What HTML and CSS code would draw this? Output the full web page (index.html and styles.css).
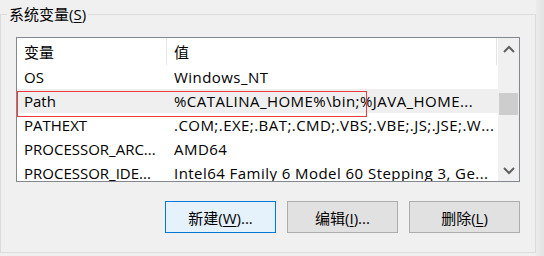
FILE: index.html
```html
<!DOCTYPE html>
<html lang="zh-CN">
<head>
<meta charset="utf-8">
<link rel="stylesheet" href="styles.css">
</head>
<body>
<div class="window">
  <fieldset class="group">
    <legend class="group-title">系统变量(<u>S</u>)</legend>
    <div class="listbox">
      <div class="list">
        <div class="header">
          <div class="col1 hcell">变量</div>
          <div class="col2 hcell">值</div>
        </div>
        <div class="row"><div class="col1">OS</div><div class="col2">Windows_NT</div></div>
        <div class="row selected"><div class="col1">Path</div><div class="col2">%CATALINA_HOME%\bin;%JAVA_HOME...</div></div>
        <div class="row"><div class="col1">PATHEXT</div><div class="col2">.COM;.EXE;.BAT;.CMD;.VBS;.VBE;.JS;.JSE;.W...</div></div>
        <div class="row"><div class="col1">PROCESSOR_ARC...</div><div class="col2">AMD64</div></div>
        <div class="row"><div class="col1">PROCESSOR_IDE...</div><div class="col2">Intel64 Family 6 Model 60 Stepping 3, Ge...</div></div>
        <div class="mark"></div>
      </div>
      <div class="scrollbar">
        <div class="sb-btn">
          <svg width="12" height="8" viewBox="0 0 12 8"><path d="M1 7 L6 2 L11 7" fill="none" stroke="#606060" stroke-width="2"/></svg>
        </div>
        <div class="sb-track"><div class="sb-thumb"></div></div>
        <div class="sb-btn">
          <svg width="12" height="8" viewBox="0 0 12 8"><path d="M1 1 L6 6 L11 1" fill="none" stroke="#606060" stroke-width="2"/></svg>
        </div>
      </div>
    </div>
    <div class="buttons">
      <button class="btn default">新建(<u>W</u>)...</button>
      <button class="btn">编辑(<u>I</u>)...</button>
      <button class="btn">删除(<u>L</u>)</button>
    </div>
  </fieldset>
  <div class="edge"></div>
</div>
</body>
</html>
```
FILE: styles.css
```css
html, body {
  margin: 0;
  padding: 0;
  background: #f0f0f0;
}
body {
  font-family: "Open Sans", "Noto Sans CJK SC", sans-serif;
  font-size: 15px;
  color: #000;
}
.window {
  width: 544px;
  height: 256px;
  display: flex;
  box-sizing: border-box;
  padding-top: 4px;
  overflow: hidden;
}
.group {
  margin: 0;
  width: 536px;
  height: 249px;
  box-sizing: border-box;
  border: 1px solid #dcdcdc;
  padding: 0 15px 0 15px;
  min-width: 0;
}
.group-title {
  margin-left: -9px;
  padding: 0 2px;
  line-height: 20px;
  height: 20px;
}
.group-title u, .btn u {
  text-decoration-thickness: 1px;
  text-underline-offset: 2px;
}
.listbox {
  margin-top: 13px;
  width: 504px;
  height: 145px;
  box-sizing: border-box;
  border: 1px solid #828790;
  background: #fff;
  display: flex;
}
.list {
  flex: 1;
  position: relative;
  overflow: hidden;
}
.header {
  height: 27px;
  display: flex;
  align-items: stretch;
}
.hcell {
  display: flex;
  align-items: center;
  border-right: 1px solid #e5e5e5;
  box-sizing: border-box;
  height: 27px;
}
.header .col2 { width: 330px; }
.col1 {
  width: 150px;
  padding-left: 7px;
  box-sizing: border-box;
  white-space: nowrap;
  overflow: hidden;
  flex: none;
}
.col2 {
  padding-left: 7px;
  box-sizing: border-box;
  white-space: nowrap;
  overflow: hidden;
  flex: none;
}
.row {
  height: 24px;
  display: flex;
  align-items: center;
}
.row .col2 {
  width: 330px;
  letter-spacing: 0.45px;
}
.row.selected { background: #efefef; }
.mark {
  position: absolute;
  left: 0;
  top: 53px;
  width: 350px;
  height: 26px;
  box-sizing: border-box;
  border: 1px solid #ee3b3b;
}
.scrollbar {
  width: 21px;
  flex: none;
  background: #f0f0f0;
  display: flex;
  flex-direction: column;
}
.sb-btn {
  height: 21px;
  display: flex;
  align-items: center;
  justify-content: center;
  flex: none;
}
.sb-track {
  flex: 1;
  padding-top: 34px;
}
.sb-thumb {
  margin-left: 1px;
  width: 19px;
  height: 22px;
  background: #cdcdcd;
}
.buttons {
  margin-top: 19px;
  width: 504px;
  display: flex;
  justify-content: flex-end;
  gap: 11px;
}
.btn {
  width: 111px;
  height: 32px;
  box-sizing: border-box;
  border: 1px solid #adadad;
  background: #e1e1e1;
  font-family: inherit;
  font-size: 15px;
  color: #000;
  padding: 0;
}
.btn.default {
  border-color: #0078d7;
  background: #e5f1fb;
}
.edge {
  flex: 1;
  margin-top: -4px;
  background: linear-gradient(to right, #ececec, #e2e2e2);
}
```
